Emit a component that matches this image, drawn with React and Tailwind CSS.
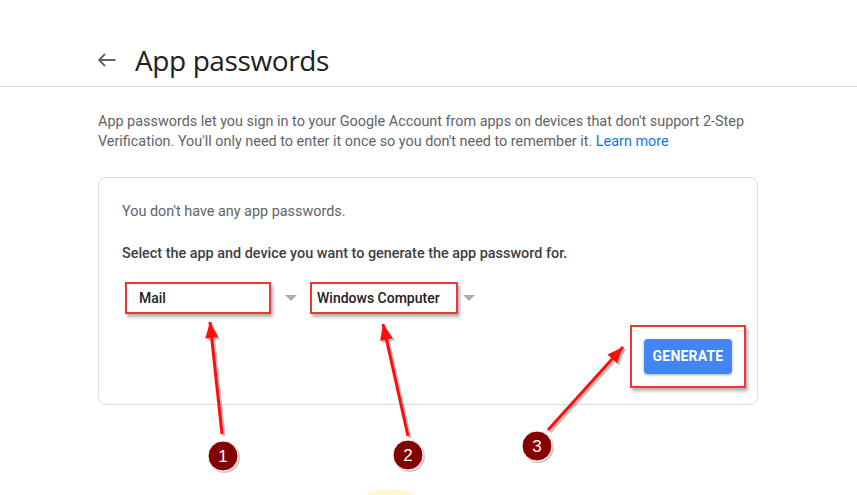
import React from 'react';

function Caret() {
  return (
    <svg width="12" height="6" viewBox="0 0 12 6" className="shrink-0">
      <path d="M0 0h12L6 6z" fill="#a9adb1" />
    </svg>
  );
}

function SelectBox({ label, width, pad }) {
  return (
    <div
      className={`flex h-8 items-center border-2 border-[#ef3535] bg-white shadow-[2px_3px_3px_rgba(0,0,0,0.3)] ${width} ${pad}`}
    >
      <span className="text-[14px] font-medium text-[#202124]">{label}</span>
    </div>
  );
}

// callout arrows + numbered badges drawn over the page
function Annotations() {
  const arrows = [
    { from: [222, 434], to: [210, 322] },
    { from: [408, 436], to: [383, 324] },
    { from: [548, 430], to: [623, 347] },
  ];
  const badges = [
    { n: '1', x: 223, y: 456 },
    { n: '2', x: 408, y: 455 },
    { n: '3', x: 537, y: 446 },
  ];

  const head = ([x1, y1], [x2, y2]) => {
    const a = Math.atan2(y2 - y1, x2 - x1);
    const len = 16;
    const w = 6.5;
    const bx = x2 - len * Math.cos(a);
    const by = y2 - len * Math.sin(a);
    const px = -Math.sin(a) * w;
    const py = Math.cos(a) * w;
    return `M${x2} ${y2}L${bx + px} ${by + py}L${bx - px} ${by - py}Z`;
  };

  return (
    <svg className="pointer-events-none absolute inset-0" width="857" height="495">
      <ellipse cx="390" cy="498" rx="26" ry="9" fill="#fff6b8" opacity="0.7" />
      {arrows.map((ar, i) => (
        <g key={i}>
          <g transform="translate(2 2)" opacity="0.25">
            <line x1={ar.from[0]} y1={ar.from[1]} x2={ar.to[0]} y2={ar.to[1]} stroke="#000" strokeWidth="3" />
            <path d={head(ar.from, ar.to)} fill="#000" />
          </g>
          <line x1={ar.from[0]} y1={ar.from[1]} x2={ar.to[0]} y2={ar.to[1]} stroke="#ff0d0d" strokeWidth="3" />
          <path d={head(ar.from, ar.to)} fill="#ff0d0d" />
        </g>
      ))}
      {badges.map((b) => (
        <g key={b.n}>
          <circle cx={b.x + 1.5} cy={b.y + 1.5} r="15.5" fill="#000" opacity="0.2" />
          <circle cx={b.x} cy={b.y} r="15" fill="#840000" stroke="#fff" strokeWidth="1" />
          <text
            x={b.x}
            y={b.y + 6}
            textAnchor="middle"
            fill="#fff"
            fontSize="17"
            fontFamily="Liberation Sans, Arial, sans-serif"
          >
            {b.n}
          </text>
        </g>
      ))}
    </svg>
  );
}

export default function App() {
  return (
    <div className="relative h-[495px] w-[857px] overflow-hidden bg-white font-['Roboto',sans-serif]">
      {/* header */}
      <div className="flex items-center border-b border-[#dadce0] pb-[8px] pl-[97px] pt-[42px]">
        <svg width="19" height="14" viewBox="0 0 19 14" className="mr-[19px]">
          <path d="M18.5 7H2M8 1L2 7l6 6" fill="none" stroke="#5f6368" strokeWidth="1.8" />
        </svg>
        <h1 className="text-[28px] leading-9 font-normal text-[#202124] font-['Open_Sans',sans-serif] tracking-[-0.4px]">
          App passwords
        </h1>
      </div>

      <div className="pl-[98px]">
        <p className="mt-[25px] w-[665px] text-[14.4px] leading-5 text-[#5f6368]">
          App passwords let you sign in to your Google Account from apps on devices that don't support 2-Step
          Verification. You'll only need to enter it once so you don't need to remember it.{' '}
          <a className="text-[#1a73e8]">Learn more</a>
        </p>

        <div className="mt-[25px] w-[660px] rounded-lg border border-[#dadce0] pb-4 pl-[23px] pr-[11px] pt-[24px]">
          <div className="text-[14.4px] leading-5 text-[#5f6368]">You don't have any app passwords.</div>
          <div className="mt-[22px] text-[14.4px] leading-5 font-medium text-[#3c4043]">
            Select the app and device you want to generate the app password for.
          </div>

          <div className="mt-[18px] flex items-center pl-[3px]">
            <SelectBox label="Mail" width="w-[146px]" pad="pl-3" />
            <div className="ml-[14px] mr-[13px]">
              <Caret />
            </div>
            <SelectBox label="Windows Computer" width="w-[148px]" pad="pl-[5px]" />
            <div className="ml-[5px]">
              <Caret />
            </div>
          </div>

          <div className="mt-[11px] flex justify-end">
            <div className="flex h-[63px] w-[116px] items-center justify-center border-2 border-[#ef3535] shadow-[2px_3px_3px_rgba(0,0,0,0.3)]">
              <button className="h-[35px] w-[88px] rounded-[4px] bg-[#4285f4] text-[14px] font-bold tracking-[0.2px] text-white shadow-[0_1px_3px_rgba(0,0,0,0.35)]">
                GENERATE
              </button>
            </div>
          </div>
        </div>
      </div>

      <Annotations />
    </div>
  );
}
